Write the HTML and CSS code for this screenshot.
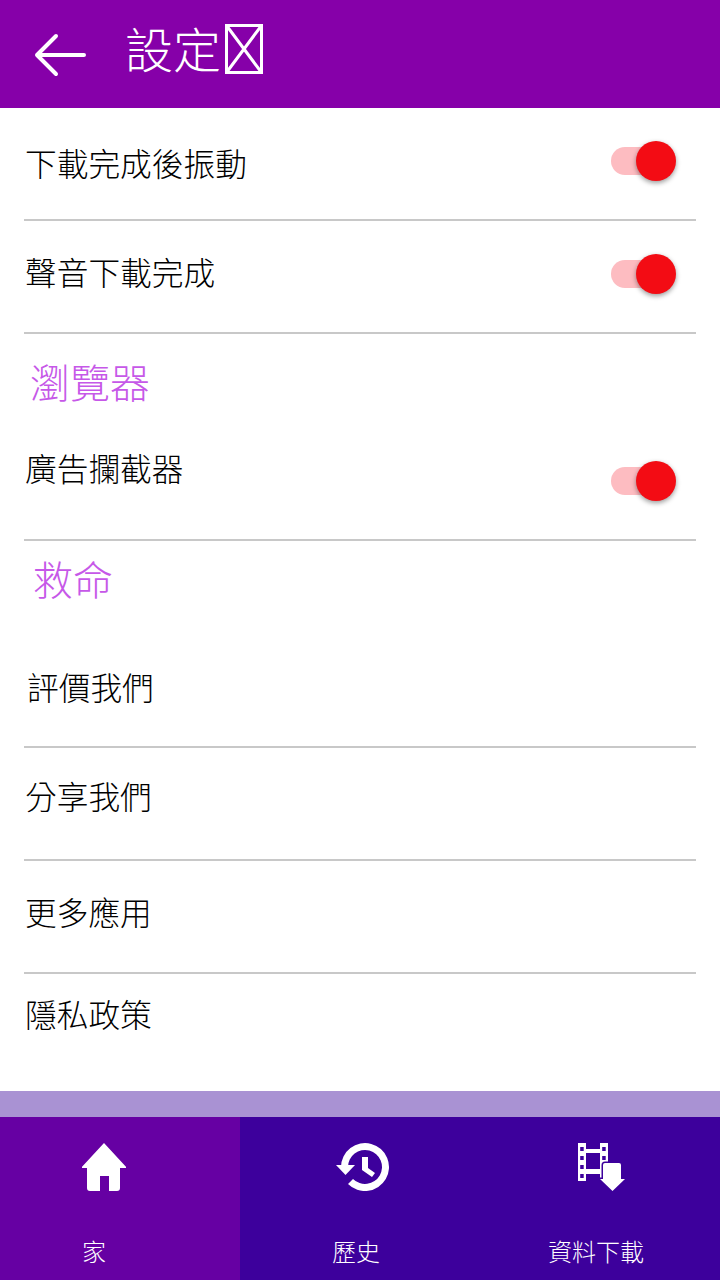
FILE: index.html
```html
<!DOCTYPE html>
<html lang="zh-Hant">
<head>
  <meta charset="UTF-8" />
  <title>設定</title>
  <link rel="stylesheet" href="styles.css">
</head>
<body>
  <div class="screen">
    <header class="topbar">
      <svg class="back-icon" viewBox="0 0 52 44" width="52" height="44">
        <path d="M50 22H3M22 3L3 22l19 19" />
      </svg>
      <h1>設定</h1>
      <svg class="tofu" viewBox="0 0 38 50" width="38" height="50">
        <path d="M1.500 1.500h35v47h-35zM1.500 1.500l35 47M36.500 1.500l-35 47" />
      </svg>
    </header>

    <main class="settings">
      <div class="row row-first">
        <span>下載完成後振動</span>
        <div class="switch"></div>
      </div>
      <div class="row row-sound">
        <span>聲音下載完成</span>
        <div class="switch"></div>
      </div>
      <h2 class="section section-browser">瀏覽器</h2>
      <div class="row row-adblock">
        <span>廣告攔截器</span>
        <div class="switch"></div>
      </div>
      <h2 class="section section-help">救命</h2>
      <div class="row row-rate"><span>評價我們</span></div>
      <div class="row row-share"><span>分享我們</span></div>
      <div class="row row-more"><span>更多應用</span></div>
      <div class="row row-privacy"><span>隱私政策</span></div>
    </main>

    <div class="strip"></div>

    <nav class="tabs">
      <div class="tab active">
        <svg class="tab-icon icon-home" viewBox="0 0 44 48" width="44" height="48">
          <path d="M22 0L43.700 23.500a.8.8 0 0 1-.6 1.500H38V45a3 3 0 0 1-3 3H27V33H18V48H8a3 3 0 0 1-3-3V25H.9a.8.8 0 0 1-.6-1.500z" />
        </svg>
        <span class="tab-label label-home">家</span>
      </div>
      <div class="tab">
        <svg class="tab-icon icon-history" viewBox="0 0 53 48" width="53" height="48">
          <path d="M5 24A24 24 0 1 1 12 41L17 36A17 17 0 1 0 12 24z" />
          <path d="M0 22H19L9.500 32z" />
          <path d="M26 14h6v11l7 5-3 4-10-7z" />
        </svg>
        <span class="tab-label label-side">歷史</span>
      </div>
      <div class="tab">
        <svg class="tab-icon icon-film" viewBox="0 0 47 48" width="47" height="48">
          <path fill-rule="evenodd" d="M0 0h8v6h14V0h8v38h-8v-7H8v7H0zM8 10v16h14V10zM2.200 4v4h3.500V4zm0 9v4h3.500v-4zm0 9v4h3.500v-4zm0 9v4h3.500v-4zM24.200 4v4h3.500V4zm0 9v4h3.500v-4z" />
          <path class="arrow-gap" d="M25 22a2 2 0 0 1 2-2h14a2 2 0 0 1 2 2v14h4L34.500 48 22 36h3z" />
        </svg>
        <span class="tab-label label-side">資料下載</span>
      </div>
    </nav>
  </div>
</body>
</html>
```

FILE: styles.css
```css
* {
  margin: 0;
  padding: 0;
  box-sizing: border-box;
}

body {
  font-family: "Noto Sans CJK TC", "Noto Sans", sans-serif;
  background: #fff;
  color: #000;
}

.screen {
  width: 720px;
  height: 1280px;
  display: flex;
  flex-direction: column;
  overflow: hidden;
}

.topbar {
  height: 108px;
  flex-shrink: 0;
  background: #8600a9;
  color: #fff;
  display: flex;
  align-items: center;
  padding-left: 34px;
}

.back-icon {
  fill: none;
  stroke: #fff;
  stroke-width: 4;
  stroke-linecap: round;
  stroke-linejoin: round;
  margin-top: 2px;
}

.topbar h1 {
  font-size: 48px;
  font-weight: 300;
  margin-left: 39px;
  line-height: 1;
  margin-top: -14px;
}

.tofu {
  margin-left: 4px;
  margin-top: -10px;
  fill: none;
  stroke: #fff;
  stroke-width: 3;
}

.settings {
  flex: 1;
  padding: 0 24px;
  display: flex;
  flex-direction: column;
}

.row {
  display: flex;
  justify-content: space-between;
  font-size: 31.700px;
  font-weight: 300;
  line-height: 46px;
  padding-left: 1px;
  padding-right: 29px;
  border-bottom: 2px solid #c8c8c8;
}

.row-first {
  height: 113px;
  padding-top: 31px;
}

.row-sound {
  height: 113px;
  padding-top: 27px;
}

.row-adblock {
  height: 112px;
  padding-top: 15px;
}

.row-rate {
  height: 112px;
  padding-top: 27px;
  padding-left: 3px;
}

.row-share {
  height: 113px;
  padding-top: 24px;
}

.row-more {
  height: 113px;
  padding-top: 27px;
}

.row-privacy {
  padding-top: 16px;
  border-bottom: none;
}

.section {
  font-size: 40px;
  font-weight: 300;
  color: #c658e8;
  line-height: 56px;
}

.section-browser {
  height: 95px;
  padding-top: 19px;
  padding-left: 6px;
}

.section-help {
  height: 95px;
  padding-top: 9px;
  padding-left: 9px;
}

.switch {
  position: relative;
  width: 56px;
  height: 28px;
  margin-top: 8px;
  border-radius: 14px;
  background: #fdbcc1;
}

.switch::after {
  content: "";
  position: absolute;
  right: -9px;
  top: -6px;
  width: 40px;
  height: 40px;
  border-radius: 50%;
  background: #f30c14;
  box-shadow: 0 2px 5px rgba(0, 0, 0, 0.4);
}

.row-sound .switch {
  margin-top: 12px;
}

.row-adblock .switch {
  margin-top: 23px;
}

.strip {
  height: 26px;
  flex-shrink: 0;
  background: #a992d3;
}

.tabs {
  height: 163px;
  flex-shrink: 0;
  display: grid;
  grid-template-columns: repeat(3, 1fr);
  background: #3d009c;
  color: #fff;
}

.tab {
  display: flex;
  flex-direction: column;
  align-items: center;
  padding-top: 26px;
}

.tab.active {
  background: #6600a3;
}

.tab-icon {
  fill: #fff;
}

.icon-home {
  margin-right: 32px;
}

.icon-history {
  margin-left: 5px;
}

.icon-film {
  margin-left: 3px;
}

.arrow-gap {
  stroke: #3d009c;
  stroke-width: 3;
  paint-order: stroke;
}

.tab-label {
  font-size: 24px;
  font-weight: 300;
  line-height: 34px;
  margin-top: 43px;
}

.label-home {
  margin-right: 52px;
}

.label-side {
  margin-right: 8px;
}
```
